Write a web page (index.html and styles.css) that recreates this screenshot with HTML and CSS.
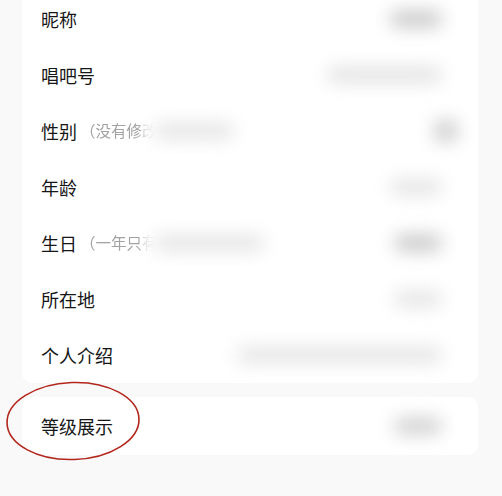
FILE: index.html
```html
<!DOCTYPE html>
<html lang="zh-CN">
<head>
<meta charset="utf-8">
<link rel="stylesheet" href="styles.css">
</head>
<body>
<div class="page">
  <div class="card card-main">
    <div class="row"><span class="label">昵称</span><span class="blob b-dark w50"></span></div>
    <div class="row"><span class="label">唱吧号</span><span class="blob b-light w115"></span></div>
    <div class="row"><span class="label">性别</span><span class="sub">（没有修改</span><span class="blob b-faint sub-blob w80"></span><span class="blob b-mid w22 shift"></span></div>
    <div class="row"><span class="label">年龄</span><span class="blob b-faint w50"></span></div>
    <div class="row"><span class="label">生日</span><span class="sub">（一年只有</span><span class="blob b-faint sub-blob w110"></span><span class="blob b-dark w45"></span></div>
    <div class="row"><span class="label">所在地</span><span class="blob b-faint w45"></span></div>
    <div class="row"><span class="label">个人介绍</span><span class="blob b-faint w205"></span></div>
  </div>
  <div class="card card-level">
    <div class="row"><span class="label">等级展示</span><span class="blob b-mid w45"></span></div>
  </div>
  <svg class="circle" width="160" height="100" viewBox="0 0 160 100">
    <ellipse cx="73" cy="50" rx="66" ry="38.5" fill="none" stroke="#b3261c" stroke-width="1.6" transform="rotate(-2 73 50)"/>
  </svg>
</div>
</body>
</html>
```

FILE: styles.css
```css
* { box-sizing: border-box; }
html, body {
  margin: 0;
  padding: 0;
  background: #f9f9f9;
  font-family: "Noto Sans CJK SC", "Noto Sans", sans-serif;
  overflow: hidden;
}
.page {
  position: relative;
  width: 502px;
  height: 496px;
  padding: 0 24px 0 22px;
}
.card {
  background: #ffffff;
  border-radius: 10px;
}
.card-main {
  margin-top: -9px;
}
.card-level {
  margin-top: 14px;
  height: 58px;
}
.row {
  height: 56px;
  display: flex;
  align-items: center;
  padding: 0 36px 0 19px;
}
.card-level .row { height: 58px; }
.label {
  font-size: 18px;
  color: #161616;
  line-height: 1;
  white-space: nowrap;
}
.sub {
  font-size: 15.5px;
  color: #a3a3a3;
  margin-left: 3px;
  white-space: nowrap;
  line-height: 1;
  -webkit-mask-image: linear-gradient(to right, #000 58px, rgba(0,0,0,0.25) 66px, transparent 76px);
  mask-image: linear-gradient(to right, #000 58px, rgba(0,0,0,0.25) 66px, transparent 76px);
}
.blob {
  display: block;
  height: 16px;
  border-radius: 8px;
  filter: blur(9px);
  margin-left: auto;
}
.sub-blob {
  margin-left: -4px;
}
.b-dark { background: #c6c6c6; }
.b-mid { background: #cecece; }
.b-light { background: #e2e2e2; }
.b-faint { background: #e4e4e4; }
.w22 { width: 24px; height: 22px; }
.w45 { width: 48px; }
.w50 { width: 52px; }
.w80 { width: 80px; }
.w110 { width: 110px; }
.w115 { width: 115px; }
.w205 { width: 205px; }
.shift { margin-right: -16px; }
.circle {
  position: absolute;
  left: 0;
  top: 380px;
}
```
